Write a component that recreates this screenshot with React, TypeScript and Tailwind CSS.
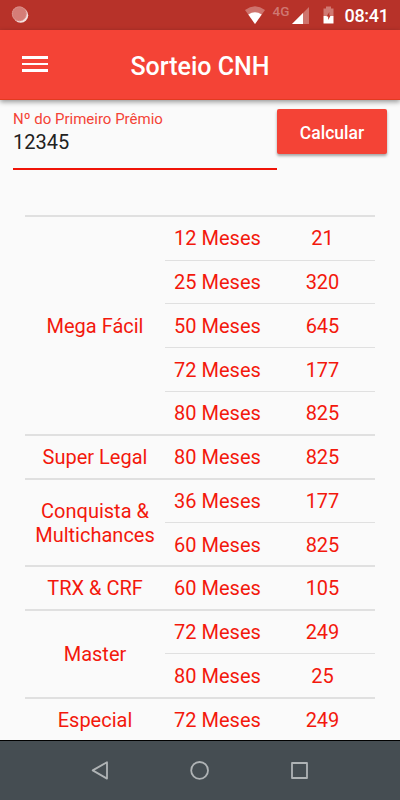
import { useState } from "react"

interface Prize {
  months: number
  value: number
}

interface Plan {
  name: string
  prizes: Prize[]
}

const plans: Plan[] = [
  {
    name: "Mega Fácil",
    prizes: [
      { months: 12, value: 21 },
      { months: 25, value: 320 },
      { months: 50, value: 645 },
      { months: 72, value: 177 },
      { months: 80, value: 825 },
    ],
  },
  { name: "Super Legal", prizes: [{ months: 80, value: 825 }] },
  {
    name: "Conquista & Multichances",
    prizes: [
      { months: 36, value: 177 },
      { months: 60, value: 825 },
    ],
  },
  { name: "TRX & CRF", prizes: [{ months: 60, value: 105 }] },
  {
    name: "Master",
    prizes: [
      { months: 72, value: 249 },
      { months: 80, value: 25 },
    ],
  },
  { name: "Especial", prizes: [{ months: 72, value: 249 }] },
]

function StatusBar() {
  return (
    <div className="flex h-[30px] shrink-0 items-center bg-[#b73229] pr-[11px] pl-[11px] text-white">
      <svg width="18" height="18" viewBox="0 0 18 18">
        <circle cx="9.7" cy="9.2" r="7.5" fill="#fff" fillOpacity="0.85" />
        <circle cx="8.3" cy="7.8" r="7.4" fill="#d57d77" />
        <circle cx="8.3" cy="7.8" r="7" fill="none" stroke="#e3a5a1" strokeDasharray="1 1" />
      </svg>
      <svg className="ml-auto" width="22" height="18" viewBox="0 0 22 18">
        <path d="M1 4Q11 -3.4 21 4L11 18Z" fill="#fff" fillOpacity="0.32" />
        <path d="M4.3 8.6Q11 3.9 17.7 8.6L11 18Z" fill="#fff" />
      </svg>
      <span className="mt-[-6px] ml-[7px] w-[18px] text-[13.5px] leading-none font-medium text-white/35">4G</span>
      <svg className="ml-px" width="17" height="17" viewBox="0 0 17 17">
        <path d="M17 0V17H0Z" fill="#fff" fillOpacity="0.32" />
        <path d="M11 6V17H0Z" fill="#fff" />
      </svg>
      <svg className="ml-[14px]" width="11" height="18" viewBox="0 0 11 18">
        <path d="M3 0.5H8V2.5H10.5V10H0.5V2.5H3Z" fill="#fff" fillOpacity="0.35" />
        <path d="M0.5 10H10.5V17.5H0.5Z" fill="#fff" />
        <path d="M6.3 6L3.6 10.6H5.2V14L7.6 9.6H6.3Z" fill="#b73229" />
      </svg>
      <span className="mt-[2px] ml-[11px] w-[44.5px] text-[18px] leading-none font-medium tracking-[-0.3px]">08:41</span>
    </div>
  )
}

function NavigationBar() {
  return (
    <div className="flex h-[60px] shrink-0 items-center justify-center gap-20 border-t border-black bg-[#454d52]">
      <svg width="20" height="20" viewBox="0 0 20 20" fill="none" stroke="#afb3b5" strokeWidth="1.8" strokeLinejoin="round">
        <path d="M17 1.2V17.6L2.7 9.4Z" />
      </svg>
      <svg width="20" height="20" viewBox="0 0 20 20" fill="none" stroke="#afb3b5" strokeWidth="1.8">
        <circle cx="9.6" cy="9.4" r="8.4" />
      </svg>
      <svg width="20" height="20" viewBox="0 0 20 20" fill="none" stroke="#afb3b5" strokeWidth="1.8" strokeLinejoin="round">
        <rect x="2" y="2" width="15" height="15" />
      </svg>
    </div>
  )
}

export default function App() {
  const [number, setNumber] = useState("12345")

  return (
    <div className="flex h-[800px] w-[400px] flex-col overflow-hidden bg-[#fafafa] font-['Roboto',sans-serif]">
      <StatusBar />
      <header className="relative flex h-[70px] shrink-0 items-center justify-center border-b border-[#e23a20] bg-[#f44336] shadow-[0_2px_5px_rgba(0,0,0,0.4)]">
        <button aria-label="Menu" className="absolute top-[26px] left-[22px] flex w-[26px] flex-col gap-1">
          <span className="h-[2.5px] bg-white" />
          <span className="h-[2.5px] bg-white" />
          <span className="h-[2.5px] bg-white" />
        </button>
        <h1 className="pt-1 text-[25px] font-medium text-white">Sorteio CNH</h1>
      </header>

      <main className="min-h-0 flex-1 overflow-hidden">
        <div className="flex items-start pt-[9px] pr-[13px] pl-[13px]">
          <label className="flex h-[61px] w-[264px] flex-col border-b-2 border-[#f01408]">
            <span className="text-[15px] leading-[20px] text-[#f44336]">Nº do Primeiro Prêmio</span>
            <input
              className="h-[26px] w-full bg-transparent text-[20px] leading-[26px] text-[#212121] outline-none"
              value={number}
              onChange={(e) => setNumber(e.target.value)}
            />
          </label>
          <button className="h-[45px] w-[110px] rounded-[2px] bg-[#f44336] pt-[3px] text-[17.5px] font-medium text-white shadow-[0_2px_3px_rgba(0,0,0,0.35)]">
            Calcular
          </button>
        </div>

        <div className="mt-[45.3px] ml-[25px] w-[350px] text-center text-[20px] leading-[24px] text-[#f3180c]">
          {plans.map((plan) => (
            <section key={plan.name} className="flex border-t-2 border-[#e0e0e0]">
              <div className="-mt-[2px] flex w-[140px] items-center justify-center px-2 pt-[2px]">{plan.name}</div>
              <div className="-mt-[1.4px] -mb-[0.6px] w-[210px]">
                {plan.prizes.map((prize) => (
                  <div
                    key={prize.months}
                    className="flex h-[43.75px] items-center border-t border-[#e0e0e0] first:border-transparent"
                  >
                    <span className="w-[105px]">{prize.months} Meses</span>
                    <span className="w-[105px]">{prize.value}</span>
                  </div>
                ))}
              </div>
            </section>
          ))}
        </div>
      </main>

      <NavigationBar />
    </div>
  )
}
